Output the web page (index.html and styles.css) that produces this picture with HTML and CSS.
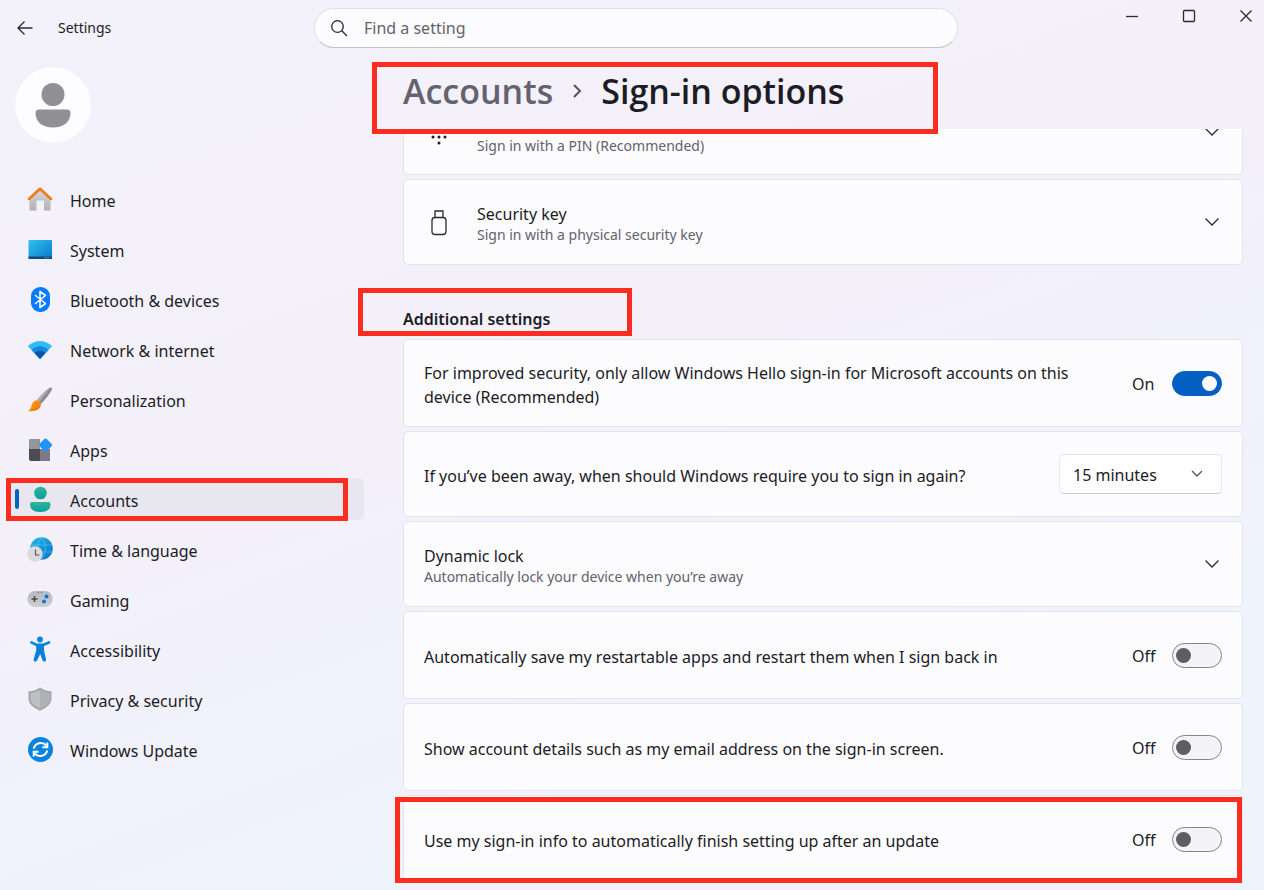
FILE: index.html
```html
<!DOCTYPE html>
<html lang="en">
<head>
<meta charset="utf-8">
<title>Settings</title>
<link rel="stylesheet" href="styles.css">
</head>
<body>
<div class="window">
  <header class="titlebar">
    <div class="titlebar-start">
      <button class="icon-button" aria-label="Back">
        <svg width="16" height="16" viewBox="0 0 16 16" class="line"><path d="M15.500 8H1M7.500 1.500L1 8l6.500 6.500"/></svg>
      </button>
      <span>Settings</span>
    </div>
    <label class="search">
      <svg width="18" height="18" viewBox="0 0 18 18" class="line search-icon"><circle cx="7.500" cy="7.500" r="5.800"/><path d="M11.800 11.800L17 17"/></svg>
      <input type="text" placeholder="Find a setting" aria-label="Find a setting">
    </label>
    <div class="window-controls">
      <button class="icon-button" aria-label="Minimize"><svg width="14" height="14" viewBox="0 0 14 14" class="line"><path d="M1 7.500h12"/></svg></button>
      <button class="icon-button" aria-label="Maximize"><svg width="14" height="14" viewBox="0 0 14 14" class="line"><rect x="1.500" y="1.500" width="11" height="11" rx="1"/></svg></button>
      <button class="icon-button" aria-label="Close"><svg width="14" height="14" viewBox="0 0 14 14" class="line"><path d="M1.500 1.500l11 11M12.500 1.500l-11 11"/></svg></button>
    </div>
  </header>

  <aside class="sidebar">
    <div class="avatar">
      <svg width="36" height="46" viewBox="0 0 36 46" fill="#919094"><circle cx="18" cy="12.500" r="11.500"/><path d="M4 27.500h28a3.500 3.500 0 0 1 3.500 3.500c0 9-7 14.500-17.500 14.500S.5 40 .5 31A3.500 3.500 0 0 1 4 27.500z"/></svg>
    </div>
    <nav class="nav">
      <a href="#home"><svg width="26" height="26" viewBox="0 0 26 26"><defs><linearGradient id="wall" x1="0" y1="0" x2="0" y2="1"><stop offset="0" stop-color="#dcdadd"/><stop offset="1" stop-color="#b2aeb5"/></linearGradient></defs><path d="M2.500 12L13 3l10.500 9v11.500q0 1-1 1H17V14.500H9.500v10H3.500q-1 0-1-1z" fill="url(#wall)"/><path d="M2 13L13 2.700 24 13" fill="none" stroke="#f07c12" stroke-width="2.600" stroke-linecap="round" stroke-linejoin="round"/></svg><span class="nav-label">Home</span></a>
      <a href="#system"><svg width="26" height="26" viewBox="0 0 26 26"><defs><linearGradient id="screen" x1="0" y1="0" x2="1" y2="1"><stop offset="0" stop-color="#32c1e8"/><stop offset="1" stop-color="#0679cf"/></linearGradient></defs><rect x="1.500" y="4" width="23.500" height="19" rx="1" fill="url(#screen)"/><path d="M1.500 20.500H25V22q0 1-1 1H2.500q-1 0-1-1z" fill="#104a7b"/><path d="M18 21.700h1m1.500 0h1" stroke="#8cc9ed"/></svg><span class="nav-label">System</span></a>
      <a href="#bluetooth"><svg width="26" height="26" viewBox="0 0 26 26"><rect x="4" y="1" width="19" height="25" rx="9" fill="#087cff"/><path d="M8.500 9.500l10 8-5.500 4V5.500l5.500 4-10 8" fill="none" stroke="#fff" stroke-width="1.600" stroke-linejoin="round" stroke-linecap="round"/></svg><span class="nav-label">Bluetooth &amp; devices</span></a>
      <a href="#network"><svg width="26" height="26" viewBox="0 0 26 26"><path d="M13 23L.8 10Q13-.2 25.200 10z" fill="#30bdf4"/><path d="M13 23L4.300 13.700Q13 6.500 21.700 13.700z" fill="#1688df"/><path d="M13 23L7.500 17Q13 12.500 18.500 17z" fill="#0b55ab"/></svg><span class="nav-label">Network &amp; internet</span></a>
      <a href="#personalization"><svg width="26" height="26" viewBox="0 0 26 26"><defs><linearGradient id="bristle" x1="0" y1="0" x2="1" y2="1"><stop offset="0" stop-color="#ffad24"/><stop offset="1" stop-color="#ec6b08"/></linearGradient></defs><path d="M10 14Q17 5 23 1.700q2.500-.8 2 1.600Q22.500 9 14 18z" fill="#8d8b91"/><path d="M10 14Q17 5 23 1.700L12 16z" fill="#b3b1b7"/><path d="M9.500 14.300q4.500.2 4.500 4.700-2 7.500-13 6 3-1.500 3.500-5 .7-5 5-5.700z" fill="url(#bristle)"/></svg><span class="nav-label">Personalization</span></a>
      <a href="#apps"><svg width="26" height="26" viewBox="0 0 26 26"><path d="M3 3q-1 0-1 1v9h11V3z" fill="#94969b"/><path d="M2 13h11v12H4q-2 0-2-2z" fill="#4b4c52"/><path d="M13 13h10v12H13z" fill="#7c7b85"/><path d="M17 3.200q1.500-1.500 3 0l4.500 4.600q1.300 1.200 0 2.500L20 14.800q-1.500 1.400-3 0l-4.500-4.500q-1.300-1.300 0-2.500z" fill="#2492f2"/></svg><span class="nav-label">Apps</span></a>
      <a href="#accounts" class="selected" aria-current="page"><svg width="26" height="26" viewBox="0 0 26 26"><defs><linearGradient id="person" x1="0" y1="0" x2="0" y2="1"><stop offset="0" stop-color="#2cb895"/><stop offset="1" stop-color="#0d9d9f"/></linearGradient></defs><circle cx="13.500" cy="7" r="6.300" fill="url(#person)"/><path d="M5 16h16.500q2 0 2 2.200 0 7.800-10.200 7.800T3 18.200Q3 16 5 16z" fill="url(#person)"/></svg><span class="nav-label">Accounts</span><span class="mark mark-nav"></span></a>
      <a href="#time"><svg width="26" height="26" viewBox="0 0 26 26"><defs><linearGradient id="globe" x1="0" y1="0" x2="1" y2="1"><stop offset="0" stop-color="#24bce3"/><stop offset="1" stop-color="#0871ce"/></linearGradient></defs><circle cx="14.500" cy="12.500" r="11.300" fill="url(#globe)"/><path d="M4 9h21M4 16h21M14.500 1q-8 11 0 23M14.500 1q8 11 0 23" fill="none" stroke="#60c9ef" stroke-width=".6"/><circle cx="8" cy="18" r="7.700" fill="#d9dadd"/><path d="M8.500 13.500v5.500h4" fill="none" stroke="#55565d" stroke-width="1.200"/></svg><span class="nav-label">Time &amp; language</span></a>
      <a href="#gaming"><svg width="26" height="26" viewBox="0 0 26 26"><defs><linearGradient id="pad" x1="0" y1="0" x2="0" y2="1"><stop offset="0" stop-color="#b7b9c0"/><stop offset="1" stop-color="#cdced2"/></linearGradient></defs><rect x=".5" y="5" width="25" height="16" rx="7.800" fill="url(#pad)"/><path d="M4.500 13h6M7.500 10v6" stroke="#4a4b52" stroke-width="1.500"/><circle cx="19.500" cy="10.500" r="2" fill="#0878d7"/><circle cx="17" cy="15.500" r="2" fill="#0878d7"/><path d="M11 6.500h1m2 0h1" stroke="#3d7eb7"/></svg><span class="nav-label">Gaming</span></a>
      <a href="#accessibility"><svg width="26" height="26" viewBox="0 0 26 26"><circle cx="13" cy="3.500" r="2.900" fill="#0b86df"/><path d="M4.500 6.500L10 9h6l6-2.500" fill="none" stroke="#0b86df" stroke-width="2.800" stroke-linecap="round" stroke-linejoin="round"/><path d="M9 8h8v6l2 9.500q.3 2-1.400 2.200-1.600.1-2.100-1.400L13.200 18 10 24.500q-.7 1.400-2.200 1.100-1.700-.5-1.100-2.300L9.300 14z" fill="#0b7fdc"/></svg><span class="nav-label">Accessibility</span></a>
      <a href="#privacy"><svg width="26" height="26" viewBox="0 0 26 26"><path d="M13 1.500q5 3.800 11.500 3.700V13Q24.500 20 13 24.800 1.500 20 1.500 13V5.200Q8 5.300 13 1.500z" fill="#a5a6aa"/><path d="M13 4q4.500 3 9.500 3.200V13q0 5.500-9.500 9.500Q3.500 18.500 3.500 13V7.200Q8.500 7 13 4z" fill="#bfc0c3"/><path d="M13 4q4.500 3 9.500 3.200V13q0 5.500-9.500 9.500z" fill="#b0b1b5"/></svg><span class="nav-label">Privacy &amp; security</span></a>
      <a href="#update"><svg width="26" height="26" viewBox="0 0 26 26"><circle cx="13.500" cy="13.500" r="12.500" fill="#0b83dd"/><g fill="none" stroke="#fff" stroke-width="2"><path d="M6.800 12.500a7.200 7.200 0 0 1 12.500-3M20.200 14.500a7.200 7.200 0 0 1-12.500 3"/><path d="M20.300 6.500v4.800h-4.900M6.700 20.500v-4.800h4.900"/></g></svg><span class="nav-label">Windows Update</span></a>
    </nav>
  </aside>

  <main class="main">
    <h1 class="breadcrumb">
      <a href="#accounts">Accounts</a>
      <svg width="10" height="16" viewBox="0 0 10 16" class="line crumb-arrow"><path d="M2 2l6 6-6 6"/></svg>
      <span>Sign-in options</span>
      <span class="mark mark-title"></span>
    </h1>

    <div class="scroller">
      <section class="cards cards-scrolled">
        <article class="card">
          <svg width="24" height="28" viewBox="0 0 24 28" class="card-icon" fill="#1d1c26"><circle cx="6" cy="8" r="1.500"/><circle cx="12" cy="8" r="1.500"/><circle cx="18" cy="8" r="1.500"/><circle cx="6" cy="14" r="1.500"/><circle cx="12" cy="14" r="1.500"/><circle cx="18" cy="14" r="1.500"/><circle cx="6" cy="19" r="1.500"/><circle cx="12" cy="19" r="1.500"/><circle cx="18" cy="19" r="1.500"/><circle cx="12" cy="25" r="1.500"/></svg>
          <div class="card-text card-text-end"><p>Sign in with a PIN (Recommended)</p></div>
          <button class="icon-button" aria-label="Expand PIN"><svg width="16" height="10" viewBox="0 0 16 10" class="line"><path d="M1.500 1.500L8 8l6.500-6.500"/></svg></button>
        </article>
        <article class="card">
          <svg width="24" height="28" viewBox="0 0 24 28" class="card-icon line"><rect x="5" y="9.500" width="14" height="17" rx="3"/><path d="M8 9.500V3h8v6.500"/></svg>
          <div class="card-text"><h3>Security key</h3><p>Sign in with a physical security key</p></div>
          <button class="icon-button" aria-label="Expand Security key"><svg width="16" height="10" viewBox="0 0 16 10" class="line"><path d="M1.500 1.500L8 8l6.500-6.500"/></svg></button>
        </article>
      </section>

      <h2 class="section-title">Additional settings<span class="mark mark-section"></span></h2>

      <section class="cards">
        <article class="card card-tall">
          <label class="card-text" for="hello">For improved security, only allow Windows Hello sign-in for Microsoft accounts on this device (Recommended)</label>
          <div class="toggle"><span>On</span><input type="checkbox" id="hello" checked></div>
        </article>
        <article class="card">
          <label class="card-text" for="away">If you’ve been away, when should Windows require you to sign in again?</label>
          <div class="select">
            <select id="away"><option>15 minutes</option><option>Never</option></select>
            <svg width="12" height="8" viewBox="0 0 12 8" class="line"><path d="M1 1l5 5 5-5"/></svg>
          </div>
        </article>
        <article class="card">
          <div class="card-text"><h3>Dynamic lock</h3><p>Automatically lock your device when you’re away</p></div>
          <button class="icon-button" aria-label="Expand Dynamic lock"><svg width="16" height="10" viewBox="0 0 16 10" class="line"><path d="M1.500 1.500L8 8l6.500-6.500"/></svg></button>
        </article>
        <article class="card card-tall">
          <label class="card-text" for="restart">Automatically save my restartable apps and restart them when I sign back in</label>
          <div class="toggle"><span>Off</span><input type="checkbox" id="restart"></div>
        </article>
        <article class="card card-tall">
          <label class="card-text" for="details">Show account details such as my email address on the sign-in screen.</label>
          <div class="toggle"><span>Off</span><input type="checkbox" id="details"></div>
        </article>
        <article class="card card-tall">
          <label class="card-text" for="finish">Use my sign-in info to automatically finish setting up after an update</label>
          <div class="toggle"><span>Off</span><input type="checkbox" id="finish"></div>
          <span class="mark mark-card"></span>
        </article>
      </section>
    </div>
  </main>
</div>
</body>
</html>
```
FILE: styles.css
```css
* { box-sizing: border-box; }

body {
  margin: 0;
  font: 16px/24px "Noto Sans", "Open Sans", sans-serif;
  color: #1d1c26;
  background: linear-gradient(160deg, #f3f1fa 0%, #f3f0fa 45%, #eff3fb 75%, #eff3fb 100%);
}

h1, h2, h3, p { margin: 0; font-weight: 400; }

a { color: inherit; text-decoration: none; }

svg { display: block; flex: none; }

.line { fill: none; stroke: #2a2932; stroke-width: 1.3; }

.window {
  height: 100vh;
  overflow: hidden;
  display: grid;
  grid-template-columns: 364px minmax(0, 1fr);
  grid-template-rows: 56px minmax(0, 1fr);
}

/* Title bar */
.titlebar {
  grid-column: 1 / -1;
  display: grid;
  grid-template-columns: 1fr 644px 1fr;
  align-items: center;
  padding-left: 8px;
}

.titlebar-start {
  display: flex;
  align-items: center;
  gap: 25px;
  padding-left: 9px;
  font-size: 14px;
}

.icon-button {
  display: grid;
  place-items: center;
  padding: 0;
  border: 0;
  background: none;
}

.search {
  display: flex;
  align-items: center;
  gap: 16px;
  height: 40px;
  padding: 0 15px;
  border: 1px solid #e3e1ea;
  border-bottom-color: #c3c1ca;
  border-radius: 20px;
  background: #fcfbfe;
}

.search input {
  flex: 1;
  min-width: 0;
  padding: 0;
  border: 0;
  outline: 0;
  background: none;
  font: inherit;
}

.search input::placeholder { color: #65636d; opacity: 1; }

.window-controls {
  align-self: start;
  display: flex;
  justify-content: flex-end;
  gap: 43px;
  padding: 9px 11px 0 0;
}

/* Sidebar */
.avatar {
  display: grid;
  place-items: center;
  width: 76px;
  height: 76px;
  margin: 11px 0 35px 15px;
  border-radius: 50%;
  background: #fdfcfe;
}

.nav {
  display: grid;
  gap: 8px;
  padding-left: 9px;
}

.nav a {
  position: relative;
  display: flex;
  align-items: center;
  gap: 17px;
  height: 42px;
  padding-left: 18px;
  border-radius: 5px;
}

.nav-label { padding-top: 4px; }

.nav .selected { background: #e8e7f0; }

.nav .selected::before {
  content: "";
  position: absolute;
  left: 6px;
  top: 11px;
  width: 4px;
  height: 20px;
  border-radius: 2px;
  background: #0560c4;
}

/* Main column */
.main {
  display: flex;
  flex-direction: column;
  padding: 0 21px 0 39px;
}

.breadcrumb {
  position: relative;
  z-index: 1;
  display: flex;
  align-items: center;
  gap: 19px;
  height: 73px;
  padding-bottom: 4px;
  flex: none;
  font: 600 34px/64px "Open Sans", "Noto Sans", sans-serif;
}

.breadcrumb a { color: #64626d; }

.crumb-arrow { stroke: #55535d; stroke-width: 2; }

.scroller {
  flex: 1;
  min-height: 0;
  clip-path: inset(0 -60px);
}

.cards {
  display: grid;
  gap: 4px;
}

/* The list is scrolled so that its first card is partly out of view. */
.cards-scrolled { margin-top: -40px; }

.card {
  position: relative;
  display: flex;
  align-items: center;
  min-height: 86px;
  padding: 0 20px;
  border: 1px solid #e4e2eb;
  border-radius: 5px;
  background: #fcfbfe;
}

.card-tall { min-height: 88px; }

.card-icon { margin: 0 26px 0 3px; }

.card-text {
  flex: 1;
  min-width: 0;
  padding: 4px 36px 0 0;
}

.card-text-end {
  align-self: flex-end;
  padding-bottom: 18px;
}

.card-text h3 {
  font-size: 16px;
  line-height: 22px;
}

.card-text p {
  font-size: 14px;
  line-height: 20px;
  color: #64626c;
}

.card .icon-button { margin-right: 2px; }

.section-title {
  position: relative;
  padding: 42px 0 8px;
  font-size: 16px;
  font-weight: 600;
}

.toggle {
  display: grid;
  grid-template-columns: 40px 50px;
  align-items: center;
}

.toggle span { padding-top: 2px; }

.toggle input {
  appearance: none;
  display: flex;
  align-items: center;
  width: 50px;
  height: 25px;
  margin: 0;
  padding: 0 3px;
  border: 1px solid #85838b;
  border-radius: 13px;
  background: #f4f3f8;
}

.toggle input::before {
  content: "";
  width: 15px;
  height: 15px;
  border-radius: 50%;
  background: #5e5d63;
}

.toggle input:checked {
  justify-content: flex-end;
  padding-right: 4px;
  border-color: #0560c4;
  background: #0560c4;
}

.toggle input:checked::before { background: #fff; }

.select {
  display: grid;
  align-items: center;
}

.select > * { grid-area: 1 / 1; }

.select svg {
  justify-self: end;
  margin-right: 19px;
  stroke: #55535d;
  pointer-events: none;
}

.select select {
  appearance: none;
  width: 163px;
  height: 40px;
  padding: 2px 13px 0;
  border: 1px solid #e6e5ec;
  border-bottom-color: #c9c8ce;
  border-radius: 5px;
  background: #fefdff;
  color: inherit;
  font: inherit;
}

/* Highlight frames laid over the page */
.mark {
  position: absolute;
  border: 5px solid #fb2d20;
  pointer-events: none;
}

.mark-nav { inset: 0 16px -1px -3px; }
.mark-title { inset: 6px auto -5px -31px; width: 566px; }
.mark-section { inset: 23px auto 3px -45px; width: 274px; }
.mark-card { inset: 1px 0 -1px -9px; }
```
